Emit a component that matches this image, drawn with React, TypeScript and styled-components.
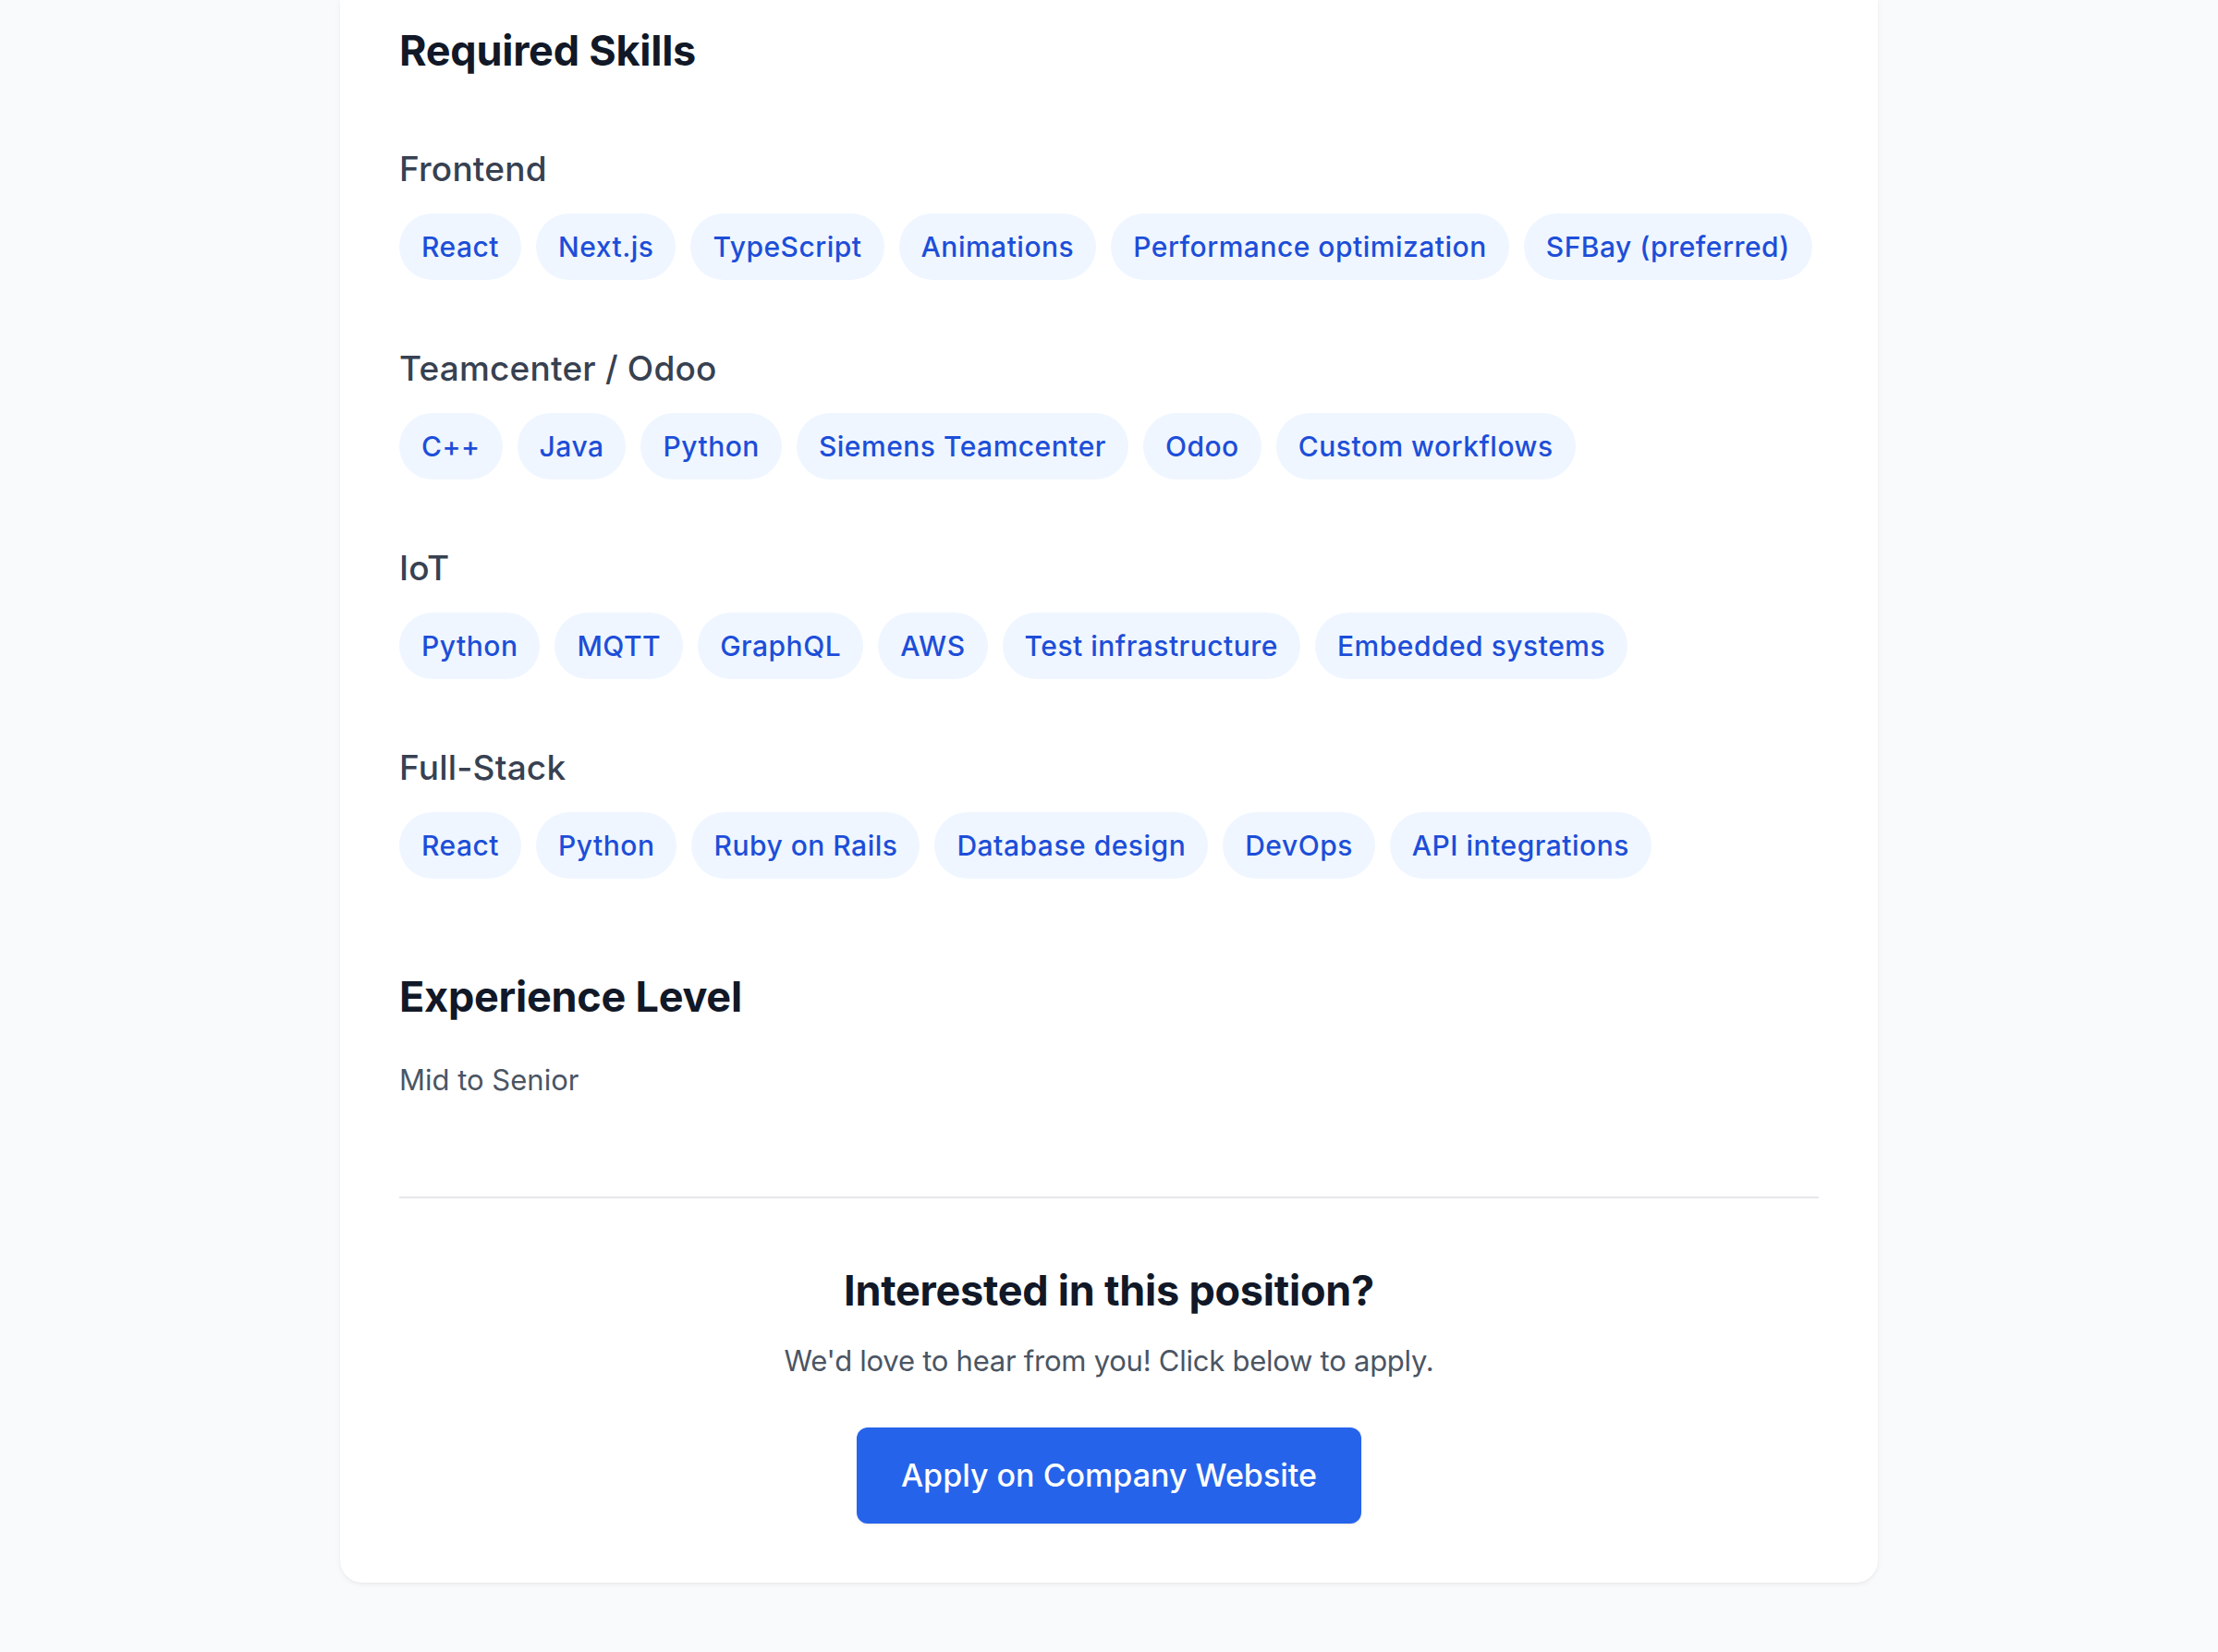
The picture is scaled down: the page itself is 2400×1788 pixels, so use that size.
import React from "react";
import styled, { createGlobalStyle } from "styled-components";

const GlobalStyle = createGlobalStyle`
  html, body {
    margin: 0;
    padding: 0;
    background: #f9fafb;
  }
  body {
    font-family: Inter, "Noto Sans", "Liberation Sans", sans-serif;
    -webkit-font-smoothing: antialiased;
  }
  * { box-sizing: border-box; }
`;

const Page = styled.main`
  min-height: 1788px;
  display: flex;
  justify-content: center;
  background: #f9fafb;
`;

const Card = styled.article`
  width: 1664px;
  align-self: flex-start;
  background: #ffffff;
  border-radius: 0 0 24px 24px;
  box-shadow: 0 2px 6px rgba(17, 24, 39, 0.05), 0 1px 2px rgba(17, 24, 39, 0.04);
  padding: 23px 64px 64px;
  display: flex;
  flex-direction: column;
`;

const Section = styled.section<{ $gapAfter?: number }>`
  display: flex;
  flex-direction: column;
  margin-bottom: ${(p) => p.$gapAfter ?? 0}px;
`;

const SectionTitle = styled.h2<{ $mb: number }>`
  margin: 0 0 ${(p) => p.$mb}px;
  font-size: 45px;
  line-height: 64px;
  font-weight: 700;
  color: #111827;
  letter-spacing: -0.25px;
`;

const CategoryList = styled.div`
  display: flex;
  flex-direction: column;
  gap: 68px;
`;

const Category = styled.div`
  display: flex;
  flex-direction: column;
`;

const CategoryLabel = styled.h3`
  margin: 0 0 20px;
  font-size: 37px;
  line-height: 56px;
  font-weight: 500;
  color: #374151;
  letter-spacing: 0.2px;
`;

const TagRow = styled.div`
  display: flex;
  flex-wrap: wrap;
  gap: 16px;
`;

const Tag = styled.span`
  display: inline-flex;
  align-items: center;
  height: 72px;
  padding: 0 24px;
  border-radius: 9999px;
  background: #eff6ff;
  color: #1d4ed8;
  font-size: 30px;
  font-weight: 500;
  line-height: 40px;
  letter-spacing: 0.5px;
  white-space: nowrap;
`;

const BodyText = styled.p`
  margin: 0;
  font-size: 31px;
  line-height: 48px;
  color: #4b5563;
`;

const Divider = styled.hr`
  margin: 0;
  border: none;
  height: 2px;
  background: #e5e7eb;
`;

const Cta = styled.section`
  padding-top: 68px;
  display: flex;
  flex-direction: column;
  align-items: center;
  text-align: center;
`;

const CtaTitle = styled.h2`
  margin: 0 0 20px;
  font-size: 45px;
  line-height: 64px;
  font-weight: 700;
  color: #111827;
  letter-spacing: -0.25px;
`;

const CtaText = styled(BodyText)`
  margin-bottom: 48px;
  letter-spacing: -0.25px;
`;

const ApplyButton = styled.a`
  display: inline-flex;
  align-items: center;
  justify-content: center;
  height: 104px;
  padding: 0 48px;
  border-radius: 12px;
  background: #2563eb;
  color: #ffffff;
  font-size: 34px;
  font-weight: 500;
  line-height: 56px;
  text-decoration: none;
  box-shadow: 0 1px 3px rgba(17, 24, 39, 0.1);
`;

const skills: { name: string; items: string[] }[] = [
  {
    name: "Frontend",
    items: ["React", "Next.js", "TypeScript", "Animations", "Performance optimization", "SFBay (preferred)"],
  },
  {
    name: "Teamcenter / Odoo",
    items: ["C++", "Java", "Python", "Siemens Teamcenter", "Odoo", "Custom workflows"],
  },
  {
    name: "IoT",
    items: ["Python", "MQTT", "GraphQL", "AWS", "Test infrastructure", "Embedded systems"],
  },
  {
    name: "Full-Stack",
    items: ["React", "Python", "Ruby on Rails", "Database design", "DevOps", "API integrations"],
  },
];

export default function App() {
  return (
    <>
      <GlobalStyle />
      <Page>
        <Card>
          <Section $gapAfter={96}>
            <SectionTitle $mb={68}>Required Skills</SectionTitle>
            <CategoryList>
              {skills.map((group) => (
                <Category key={group.name}>
                  <CategoryLabel>{group.name}</CategoryLabel>
                  <TagRow>
                    {group.items.map((item) => (
                      <Tag key={item}>{item}</Tag>
                    ))}
                  </TagRow>
                </Category>
              ))}
            </CategoryList>
          </Section>
          <Section $gapAfter={102}>
            <SectionTitle $mb={34}>Experience Level</SectionTitle>
            <BodyText>Mid to Senior</BodyText>
          </Section>
          <Divider />
          <Cta>
            <CtaTitle>Interested in this position?</CtaTitle>
            <CtaText>We'd love to hear from you! Click below to apply.</CtaText>
            <ApplyButton href="#">Apply on Company Website</ApplyButton>
          </Cta>
        </Card>
      </Page>
    </>
  );
}
